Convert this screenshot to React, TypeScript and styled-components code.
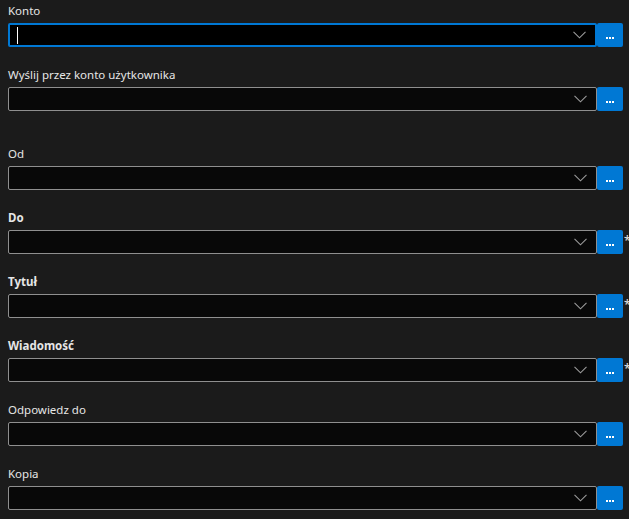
import React from "react";
import styled, { createGlobalStyle } from "styled-components";

const Global = createGlobalStyle`
  html, body { margin: 0; padding: 0; background: #1b1b1b; overflow: hidden; }
  body { font-family: "Noto Sans", "Open Sans", sans-serif; }
`;

const Page = styled.div`
  width: 629px;
  height: 519px;
  background: #1b1b1b;
  padding: 3px 0 0 8px;
  box-sizing: border-box;
  overflow: hidden;
`;

const Field = styled.div<{ $extra?: number }>`
  display: flex;
  flex-direction: column;
  margin-bottom: ${(p) => 20 + (p.$extra ?? 0)}px;
`;

const Label = styled.label<{ $bold?: boolean }>`
  font-size: 11.5px;
  line-height: 16px;
  height: 16px;
  color: #e6e6e6;
  font-weight: ${(p) => (p.$bold ? 700 : 400)};
  margin-bottom: 4px;
  white-space: nowrap;
`;

const Row = styled.div`
  display: grid;
  grid-template-columns: 1fr 26px 6px;
  height: 24px;
  width: 621px;
`;

const Combo = styled.div<{ $focused?: boolean }>`
  position: relative;
  box-sizing: border-box;
  height: 24px;
  border-radius: 2px;
  border: ${(p) => (p.$focused ? "2px solid #0078d4" : "1px solid #8f8f8f")};
  background: ${(p) => (p.$focused ? "#000000" : "#080808")};
  display: flex;
  align-items: center;
  justify-content: space-between;
  padding: 0 9px 0 ${(p) => (p.$focused ? 7 : 8)}px;
`;

const Caret = styled.span`
  display: block;
  width: 1px;
  height: 17px;
  background: #ffffff;
`;

const Chevron = styled.svg`
  display: block;
  margin-left: auto;
`;

const DotsButton = styled.button`
  box-sizing: border-box;
  height: 24px;
  width: 26px;
  margin: 0;
  padding: 5px 0 0 0;
  border: none;
  border-radius: 2px;
  background: #0078d4;
  display: flex;
  align-items: center;
  justify-content: center;
  gap: 1px;
`;

const Dot = styled.span`
  width: 2px;
  height: 2px;
  background: #ffffff;
`;

const Required = styled.span`
  font-size: 12px;
  line-height: 16px;
  color: #e6e6e6;
  padding-left: 1px;
  align-self: center;
  margin-top: -2px;
`;

type FieldDef = { label: string; bold?: boolean; required?: boolean; focused?: boolean; extra?: number };

const fields: FieldDef[] = [
  { label: "Konto", focused: true },
  { label: "Wyślij przez konto użytkownika", extra: 15 },
  { label: "Od" },
  { label: "Do", bold: true, required: true },
  { label: "Tytuł", bold: true, required: true },
  { label: "Wiadomość", bold: true, required: true },
  { label: "Odpowiedz do" },
  { label: "Kopia" },
];

export default function App() {
  return (
    <Page>
      <Global />
      {fields.map((f) => (
        <Field key={f.label} $extra={f.extra}>
          <Label $bold={f.bold}>{f.label}</Label>
          <Row>
            <Combo $focused={f.focused}>
              {f.focused && <Caret />}
              <Chevron width="13" height="8" viewBox="0 0 13 8">
                <path d="M0.5 0.8 L6.5 6.8 L12.5 0.8" fill="none" stroke="#9a9a9a" strokeWidth="1.1" />
              </Chevron>
            </Combo>
            <DotsButton type="button" aria-label="...">
              <Dot />
              <Dot />
              <Dot />
            </DotsButton>
            {f.required ? <Required>*</Required> : <span />}
          </Row>
        </Field>
      ))}
    </Page>
  );
}
